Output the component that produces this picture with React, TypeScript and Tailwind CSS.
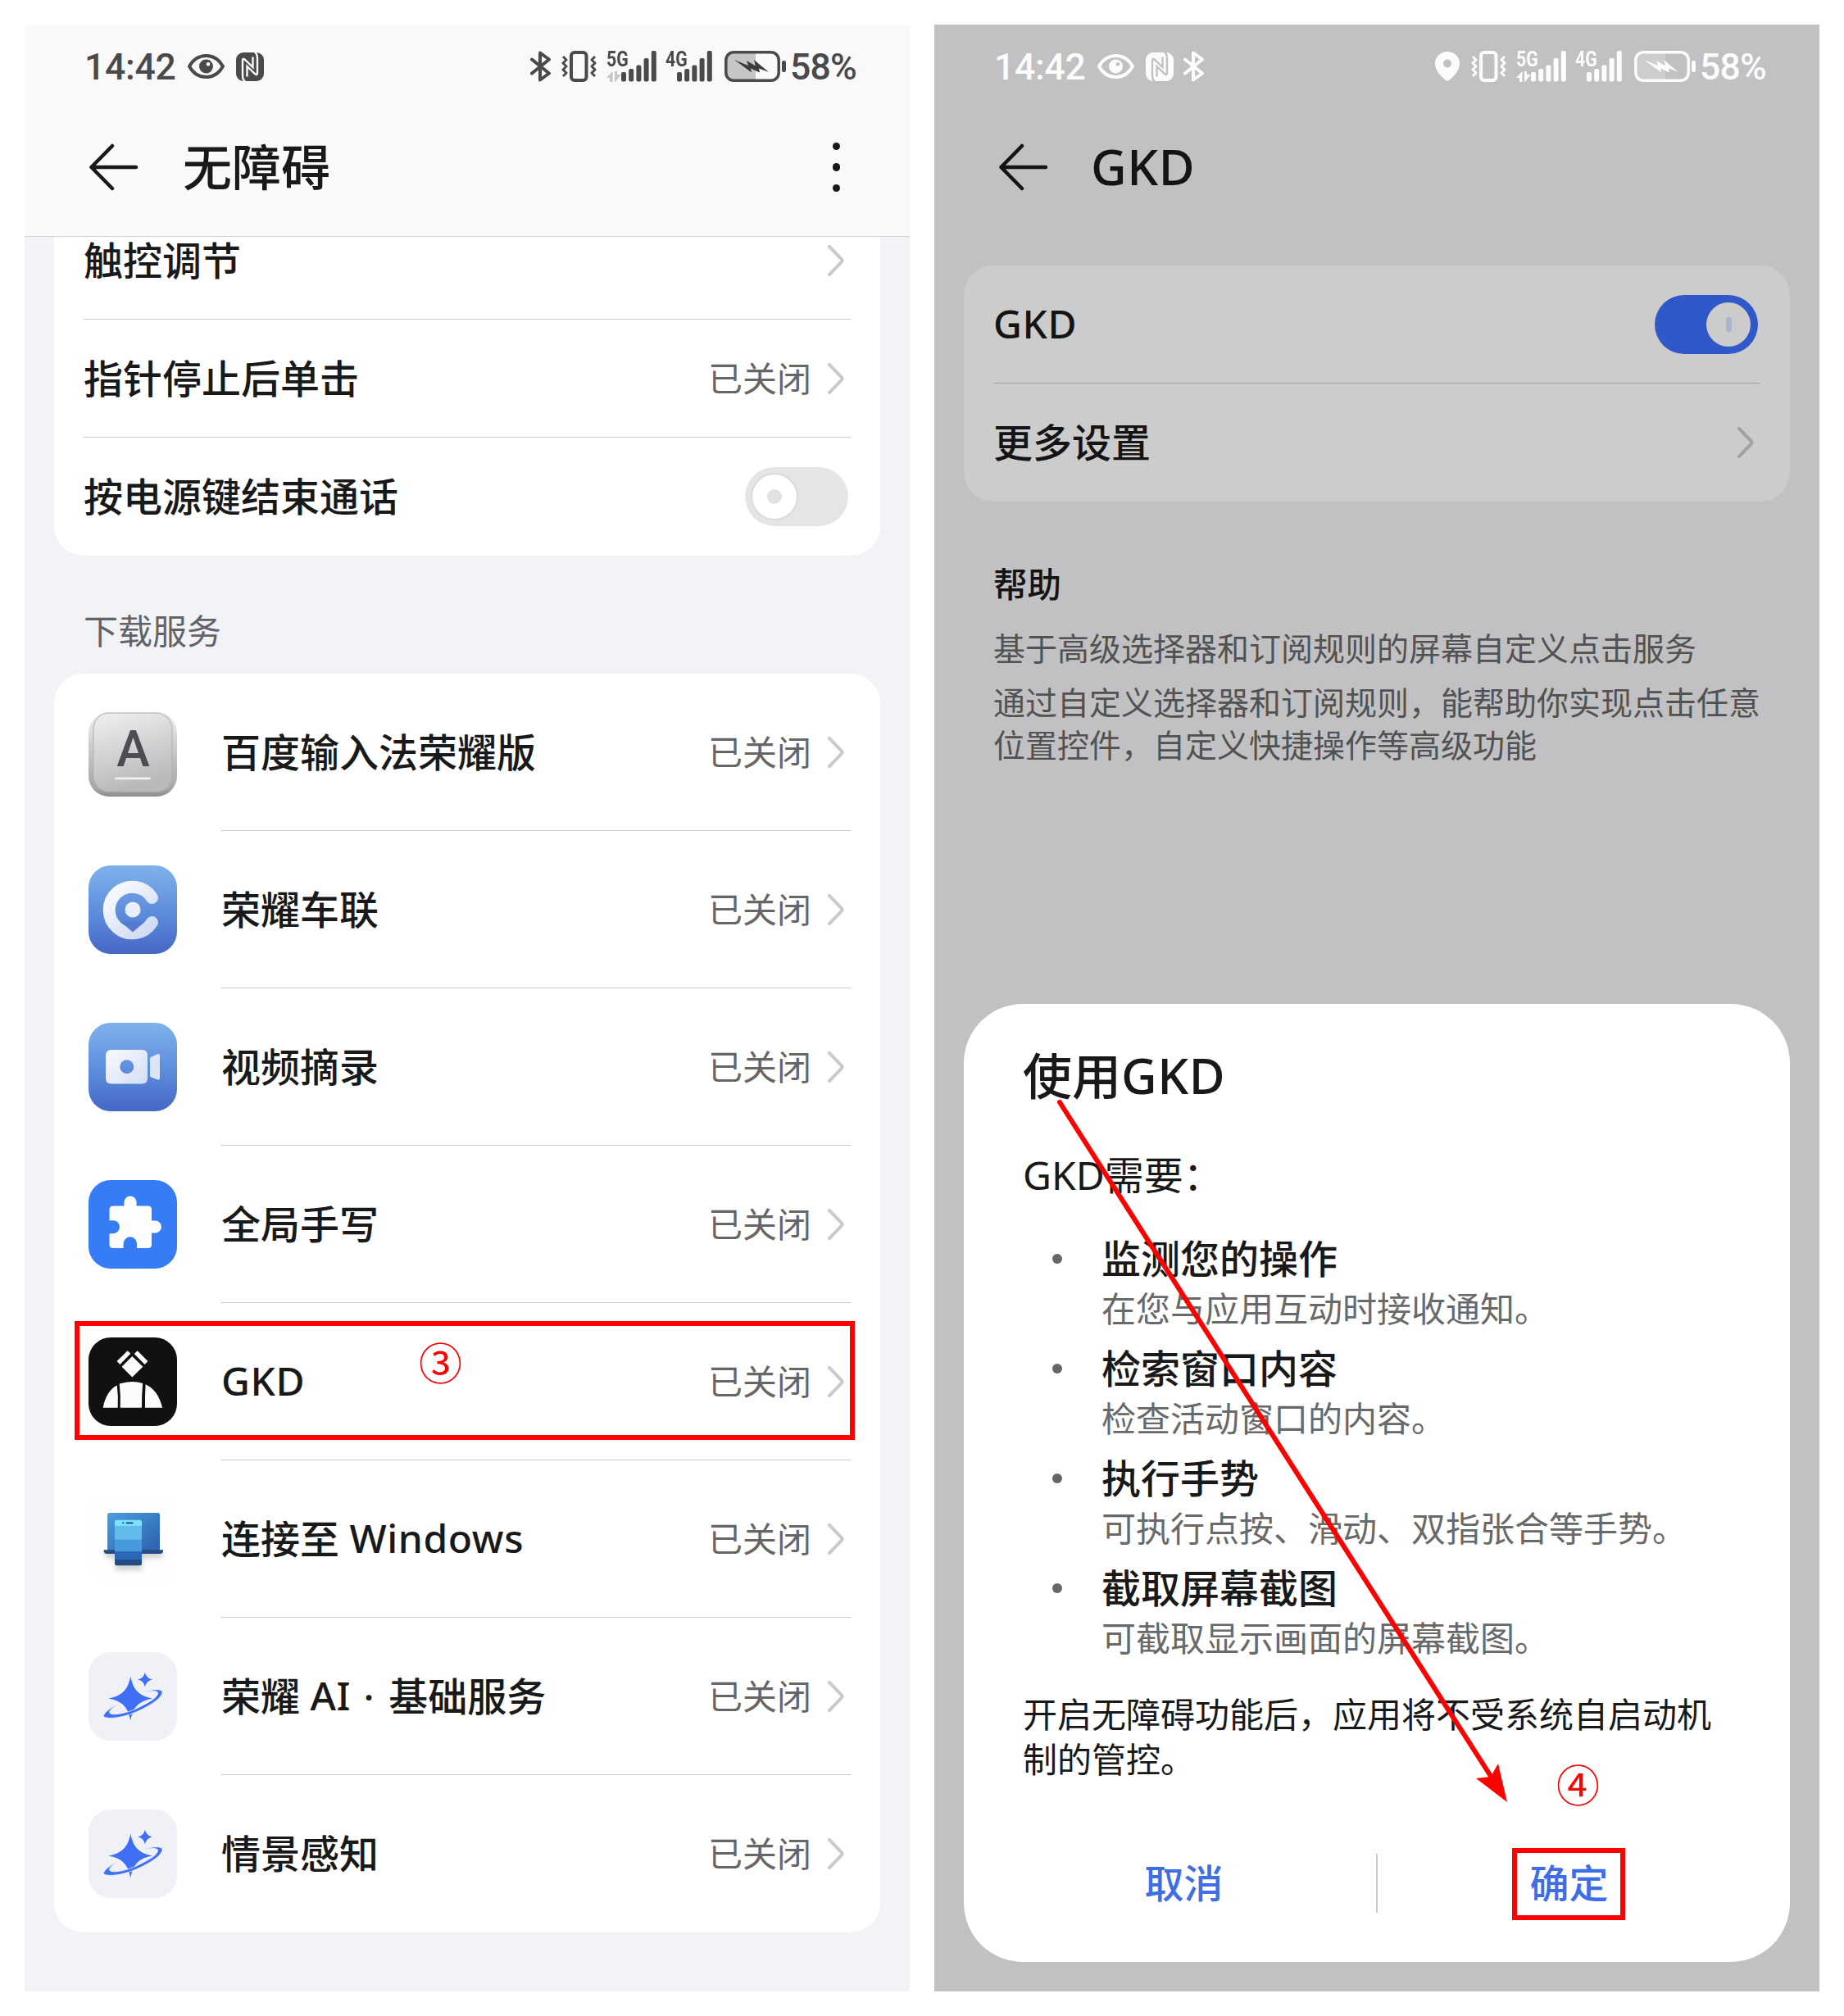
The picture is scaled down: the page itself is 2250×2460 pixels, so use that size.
import React from 'react';

/* ---------- status bar glyphs ---------- */

const EyeIcon = () => (
  <svg width="45" height="32" viewBox="0 0 45 32" fill="none" className="shrink-0">
    <path d="M2 16C7 7 14 3 22.500 3S38 7 43 16C38 25 31 29 22.500 29S7 25 2 16Z" stroke="currentColor" strokeWidth="4" strokeLinejoin="round" />
    <path fillRule="evenodd" clipRule="evenodd" d="M22.500 7.500a8.500 8.500 0 1 0 0 17a8.500 8.500 0 1 0 0-17ZM25 11a2.300 2.300 0 1 1 0 4.600a2.300 2.300 0 1 1 0-4.600Z" fill="currentColor" />
  </svg>
);

const NfcIcon = ({ gap }: { gap: string }) => (
  <svg width="34" height="35" viewBox="0 0 34 35" fill="none" className="shrink-0">
    <rect width="34" height="35" rx="9" fill="currentColor" />
    <path d="M11.500 36C8.500 34 8 31 8 28V10Q8 6.500 11 9L20.500 18V5.500" stroke={gap} strokeWidth="2.400" />
    <path d="M22.500 -1C25.500 1 26 4 26 7V25Q26 28.500 23 26L13.500 17V29.500" stroke={gap} strokeWidth="2.400" />
  </svg>
);

const BluetoothIcon = () => (
  <svg width="26" height="38" viewBox="0 0 26 38" fill="none" className="shrink-0">
    <path d="M2 10.500L23 27.500L12 35.500V2.500L23 10.500L2 27.500" stroke="currentColor" strokeWidth="4" strokeLinejoin="round" strokeLinecap="round" />
  </svg>
);

const PinIcon = () => (
  <svg width="30" height="36" viewBox="0 0 30 36" className="shrink-0">
    <path fill="currentColor" fillRule="evenodd" d="M15 0C23.500 0 30 6.500 30 14.500C30 23 22 31 17 35Q15 36.500 13 35C8 31 0 23 0 14.500C0 6.500 6.500 0 15 0ZM15 9.500a5 5 0 1 0 0 10a5 5 0 1 0 0-10Z" />
  </svg>
);

const VibrateIcon = () => (
  <svg width="43" height="38" viewBox="0 0 43 38" fill="none" stroke="currentColor" className="shrink-0">
    <rect x="12" y="2" width="18.500" height="34" rx="4" strokeWidth="4" />
    <path d="M2 7L6 11L2 15L6 19L2 23L6 27L2 31M41 7L37 11L41 15L37 19L41 23L37 27L41 31" strokeWidth="3" strokeLinejoin="round" />
  </svg>
);

const SignalBars = () => (
  <svg width="43" height="38" viewBox="0 0 43 38" fill="currentColor" className="shrink-0">
    <rect x="0" y="26" width="6" height="11.500" rx="2" />
    <rect x="9.200" y="22" width="6" height="15.500" rx="2" />
    <rect x="18.400" y="17.500" width="6" height="20" rx="2" />
    <rect x="27.600" y="9" width="6" height="28.500" rx="2" />
    <rect x="36.800" y="0" width="6" height="37.500" rx="2" />
  </svg>
);

const Signal = ({ label, arrows }: { label: string; arrows?: string }) => (
  <div className="flex h-[38px] items-start">
    <div className={`flex shrink-0 flex-col ${arrows ? 'w-[18.500px]' : 'w-[14px]'}`}>
      <span className="h-[22px] w-[26px] origin-left scale-x-[0.82] whitespace-nowrap font-['Roboto',sans-serif] text-[26px] font-bold leading-[20px]">{label}</span>
      {arrows && (
        <svg width="18" height="13" viewBox="0 0 18 13" fill={arrows} className="mt-[3px]">
          <path d="M0 8L7.500 0V13H4V8ZM10 0H13V4H18L10.500 13H10Z" />
        </svg>
      )}
    </div>
    <SignalBars />
  </div>
);

const Battery = ({ fill, bolt }: { fill: string; bolt: string }) => (
  <svg width="76" height="38" viewBox="0 0 76 38" fill="none" className="shrink-0">
    <path d="M10 3H38V35H10Q3 35 3 27V11Q3 3 10 3Z" fill={fill} />
    <rect x="1.800" y="1.800" width="64.400" height="34.400" rx="9.500" stroke="currentColor" strokeWidth="3.500" />
    <path d="M12 11L29 18L27 12L38 18.500L36 11L54 26L42 21.500L43 26.500L32 21.500L33 26.500Z" fill={bolt} />
    <rect x="70" y="12" width="5" height="14" rx="2" fill="currentColor" />
  </svg>
);

type StatusProps = { dark?: boolean };

const StatusBar = ({ dark }: StatusProps) => (
  <div className={`flex h-[102px] items-center pl-[73px] ${dark ? 'text-[#fcfcfc]' : 'text-[#4a4a4a]'}`}>
    <span className="w-[126px] whitespace-nowrap pt-[2px] font-['Roboto',sans-serif] text-[44.500px] font-medium leading-[60px] tracking-[-0.300px]">14:42</span>
    <EyeIcon />
    <div className="ml-[14px]"><NfcIcon gap={dark ? '#c1c1c3' : '#f9f9f9'} /></div>
    {dark && <div className="ml-[12px]"><BluetoothIcon /></div>}
    <div className="ml-auto mr-[64px] flex items-center">
      {dark ? <div className="mr-[14px]"><PinIcon /></div> : <div className="mr-[12px]"><BluetoothIcon /></div>}
      <VibrateIcon />
      <div className="ml-[12px]"><Signal label="5G" arrows={dark ? '#fcfcfc' : '#c6c6c6'} /></div>
      <div className="ml-[11px]"><Signal label="4G" /></div>
      <div className="ml-[15px]"><Battery fill={dark ? '#cdcdce' : '#c6c6c6'} bolt={dark ? '#fcfcfc' : '#3c3c3c'} /></div>
      <span className="ml-[4px] w-[82px] whitespace-nowrap pt-[2px] font-['Roboto',sans-serif] text-[44.500px] font-medium leading-[60px] tracking-[-0.800px]">58%</span>
    </div>
  </div>
);

const BackArrow = () => (
  <svg width="60" height="60" viewBox="0 0 60 60" fill="none" stroke="currentColor" strokeWidth="4.500" strokeLinejoin="round" strokeLinecap="round" className="shrink-0">
    <path d="M28 4L2.500 30L28 56M2.500 30H57" />
  </svg>
);

const Chevron = ({ className }: { className: string }) => (
  <svg width="20" height="38" viewBox="0 0 20 38" fill="none" stroke="currentColor" strokeWidth="4" strokeLinecap="round" strokeLinejoin="round" className={`shrink-0 ${className}`}>
    <path d="M2 2L16.500 17Q18.500 19 16.500 21L2 36" />
  </svg>
);

/* ---------- app icons ---------- */

const KeyboardIcon = () => (
  <svg width="108" height="108" viewBox="0 0 108 108">
    <defs>
      <linearGradient id="kbOuter" x1="0" y1="0" x2="0" y2="1">
        <stop offset="0" stopColor="#f2f2f2" /><stop offset="0.500" stopColor="#c4c4c4" /><stop offset="0.900" stopColor="#a6a6a6" /><stop offset="1" stopColor="#8e8e8e" />
      </linearGradient>
      <linearGradient id="kbInner" x1="0" y1="0" x2="0.300" y2="1">
        <stop offset="0" stopColor="#f0f1f1" /><stop offset="1" stopColor="#b9b9bb" />
      </linearGradient>
    </defs>
    <rect x="0" y="5" width="108" height="103" rx="25" fill="url(#kbOuter)" />
    <rect x="6" y="6" width="96" height="96" rx="19" fill="url(#kbInner)" stroke="#b0b0b0" strokeOpacity="0.700" strokeWidth="1.500" />
    <text x="54.500" y="71" textAnchor="middle" fontFamily="Roboto" fontSize="61" fontWeight="500" fill="#4b4d52">A</text>
    <rect x="32" y="84.500" width="44" height="2.800" rx="1.400" fill="#f1f1f1" />
  </svg>
);

const CarLinkIcon = () => (
  <svg width="108" height="108" viewBox="0 0 108 108">
    <defs>
      <linearGradient id="blueBg" x1="0" y1="0" x2="0" y2="1">
        <stop offset="0" stopColor="#7fb2ec" /><stop offset="0.500" stopColor="#608fdc" /><stop offset="1" stopColor="#4567c6" />
      </linearGradient>
      <linearGradient id="whiteFade" gradientUnits="userSpaceOnUse" x1="25" y1="25" x2="80" y2="85">
        <stop offset="0" stopColor="#fbfcff" /><stop offset="1" stopColor="#ccd8f0" />
      </linearGradient>
    </defs>
    <rect width="108" height="108" rx="27" fill="url(#blueBg)" />
    <path d="M77.500 39.500A28.300 28.300 0 1 0 77.500 69.500" fill="none" stroke="url(#whiteFade)" strokeWidth="15" strokeLinecap="round" />
    <path d="M39.500 69L54 81.500L68.500 69Z" fill="#557bd1" />
    <circle cx="54" cy="54" r="9.500" fill="#eaf0fb" />
  </svg>
);

const VideoIcon = () => (
  <svg width="108" height="108" viewBox="0 0 108 108">
    <rect width="108" height="108" rx="27" fill="url(#blueBg)" />
    <path fillRule="evenodd" d="M28 33H65Q72 33 72 40V67.500Q72 74.500 65 74.500H28Q21 74.500 21 67.500V40Q21 33 28 33ZM46.800 45.200a8.500 8.500 0 1 0 0 17a8.500 8.500 0 1 0 0-17Z" fill="url(#whiteFade)" />
    <path d="M75 43.500Q75 42.300 76 41.900L84 38.200Q87 37.200 87 40V67.500Q87 70.300 84 69.300L76 66.200Q75 65.800 75 64.500Z" fill="#dce6f7" />
  </svg>
);

const PuzzleIcon = () => (
  <svg width="108" height="108" viewBox="0 0 108 108">
    <rect width="108" height="108" rx="27" fill="#367cf6" />
    <path
      fill="#fcfdff"
      d="M30 31.500H43.400V27A7.600 7.600 0 0 1 58.600 27V31.500H72.500Q77 31.500 77 36V49.500H81.500A7.500 7.500 0 0 1 81.500 64.500H77V78.500Q77 83 72.500 83H59V77.500A8.200 8.200 0 0 0 42.600 77.500V83H30Q25.500 83 25.500 78.500V65.200H30A7.800 7.800 0 0 0 30 49.200H25.500V36Q25.500 31.500 30 31.500Z"
    />
  </svg>
);

const GkdIcon = () => (
  <svg width="108" height="108" viewBox="0 0 108 108">
    <rect width="108" height="108" rx="27" fill="#111111" />
    <g fill="#fcfcfc">
      <path d="M53.300 23L66.300 35.700L53.300 48.500L40.600 35.700Z" />
      <path d="M47.700 16.200L51.300 19.700L38.500 33L34.600 29Z" />
      <path d="M59.700 16.200L72.400 29L68.700 33L55.700 20Z" />
      <path d="M17.700 85.800C20 72 27 62 34.800 58.500Q36.500 72 35.700 85.800Z" />
      <path d="M37.700 56.600Q53 51.500 66.200 56Q64.700 72 65 85.800H38.700Q39.500 71 37.700 56.600Z" />
      <path d="M69.600 57.300C80 62 87 72 90 85.800H69Q68.800 70 69.600 57.300Z" />
    </g>
  </svg>
);

const WindowsLinkIcon = () => (
  <svg width="108" height="108" viewBox="0 0 108 108">
    <defs>
      <linearGradient id="laptop" x1="0" y1="0" x2="1" y2="1">
        <stop offset="0" stopColor="#4b9edf" /><stop offset="1" stopColor="#2b5fa8" />
      </linearGradient>
      <clipPath id="phoneClip"><rect x="32" y="30.700" width="33" height="55.600" rx="2.500" /></clipPath>
      <filter id="soft" x="-30%" y="-30%" width="160%" height="180%"><feGaussianBlur stdDeviation="3" /></filter>
    </defs>
    <rect width="108" height="108" rx="27" fill="#fefefe" />
    <g filter="url(#soft)" fill="#000000" fillOpacity="0.180">
      <rect x="20" y="68" width="70" height="9" />
      <rect x="33" y="75" width="32" height="17" />
    </g>
    <rect x="23" y="22" width="64" height="48" rx="2.500" fill="url(#laptop)" />
    <path d="M18.700 67.300H91V68.500Q91 72 87 72H22.700Q18.700 72 18.700 68.500Z" fill="#264b80" />
    <g clipPath="url(#phoneClip)">
      <rect x="32" y="30" width="33" height="8" fill="#7ce2fe" />
      <rect x="32" y="38" width="33" height="17" fill="#62bbea" />
      <rect x="32" y="54.700" width="33" height="15" fill="#4898dc" />
      <rect x="32" y="69" width="33" height="10" fill="#2b67b9" />
      <rect x="32" y="79" width="33" height="8" fill="#264b80" />
    </g>
    <circle cx="42.300" cy="34.300" r="1.100" fill="#23639f" />
    <rect x="45.500" y="33.300" width="9.200" height="2.200" rx="1.100" fill="#23639f" />
  </svg>
);

const SparkleIcon = () => (
  <svg width="108" height="108" viewBox="0 0 108 108">
    <rect width="108" height="108" rx="27" fill="#eff1f7" />
    <g fill="#3e6ff5">
      <path d="M51.300 29.500C54.500 45 60 53 78 56.600C60 60 54.500 68 51.300 83.500C48 68 42.500 60 24.500 56.600C42.500 53 48 45 51.300 29.500Z" />
      <path d="M69 24.500C70.500 30 72.500 32 78 33.500C72.500 35 70.500 37 69 42.500C67.500 37 65.500 35 60 33.500C65.500 32 67.500 30 69 24.500Z" />
      <path stroke="#eff1f7" strokeWidth="0.800" d="M35.300 63.500C22 70.500 17 77 18.700 78.700C24 82.500 42 79.500 55 74.300C75 66 90 56 90 48.500C89 44.300 78 45 65 49.300C76 46.800 84.500 46.500 84.700 50C84 56 72 62.500 57 69.500C42 76 27 77.500 25.700 74C25 71.500 29 68 35.300 63.500Z" />
    </g>
  </svg>
);

/* ---------- rows ---------- */

const Label = ({ children }: { children: React.ReactNode }) => (
  <span className="whitespace-nowrap text-[48px] font-medium leading-[72px]">{children}</span>
);

const Latin = ({ children }: { children: React.ReactNode }) => (
  <span className="relative -top-px tracking-[0.600px]">{children}</span>
);

const Closed = () => (
  <div className="ml-auto flex items-center gap-[20px] pr-[8px]">
    <span className="whitespace-nowrap text-[42px] leading-[60px] text-[#666666]">已关闭</span>
    <Chevron className="text-[#cacaca]" />
  </div>
);

const apps: { name: React.ReactNode; Icon: () => React.ReactElement; marked?: boolean }[] = [
  { name: '百度输入法荣耀版', Icon: KeyboardIcon },
  { name: '荣耀车联', Icon: CarLinkIcon },
  { name: '视频摘录', Icon: VideoIcon },
  { name: '全局手写', Icon: PuzzleIcon },
  { name: <Latin>GKD</Latin>, Icon: GkdIcon, marked: true },
  { name: <>连接至 <Latin>Windows</Latin></>, Icon: WindowsLinkIcon },
  { name: <>荣耀 <Latin>AI</Latin> <span className="ml-[3px] mr-[5px]">·</span> 基础服务</>, Icon: SparkleIcon },
  { name: '情景感知', Icon: SparkleIcon },
];

const AccessibilityScreen = () => (
  <section className="flex h-[2400px] w-[1080px] flex-col bg-[#f1f3f7] text-[#191919]">
    <header className="h-[259px] shrink-0 border-b border-[#d3d4d7] bg-[#f9f9f9]">
      <StatusBar />
      <div className="flex h-[144px] items-center pl-[79px] pr-[85px]">
        <BackArrow />
        <h1 className="ml-[54px] text-[60px] font-medium leading-[80px]">无障碍</h1>
        <div className="ml-auto flex flex-col gap-[16px]">
          <i className="size-[9.500px] rounded-full bg-[#191919]" />
          <i className="size-[9.500px] rounded-full bg-[#191919]" />
          <i className="size-[9.500px] rounded-full bg-[#191919]" />
        </div>
      </div>
    </header>

    <div className="mx-[36px] h-[389px] shrink-0 overflow-hidden rounded-b-[36px] bg-white px-[36px]">
      <div className="-mt-[43px] flex h-[144px] items-center border-b border-[#cccccc]">
        <Label>触控调节</Label>
        <div className="ml-auto pr-[8px]"><Chevron className="text-[#cacaca]" /></div>
      </div>
      <div className="flex h-[144px] items-center border-b border-[#cccccc]">
        <Label>指针停止后单击</Label>
        <Closed />
      </div>
      <div className="flex h-[144px] items-center">
        <Label>按电源键结束通话</Label>
        <div className="ml-auto mr-[3px] flex h-[72px] w-[126px] items-center rounded-full bg-[#e5e5e5] pl-[7px]">
          <div className="flex size-[58px] items-center justify-center rounded-full border-2 border-[#dbdbdb] bg-white">
            <i className="size-[18px] rounded-full bg-[#e2e2e2]" />
          </div>
        </div>
      </div>
    </div>

    <h2 className="ml-[72px] mt-[62px] h-[82px] shrink-0 text-[42px] leading-[60px] text-[#626366]">下载服务</h2>

    <div className="mx-[36px] flex shrink-0 flex-col rounded-[36px] bg-white pl-[42px] pr-[36px]">
      {apps.map(({ name, Icon, marked }, i) => (
        <div key={i} className="relative flex h-[192px] items-center">
          <Icon />
          <div className={`ml-[54px] flex h-full flex-1 items-center ${i < apps.length - 1 ? 'border-b border-[#cccccc]' : 'pb-px'}`}>
            <Label>{name}</Label>
            <Closed />
          </div>
          {marked && (
            <div className="absolute -left-[17px] -right-[5px] top-[22px] h-[145px] border-[6px] border-[#ff0000]">
              <span className="absolute left-[414px] top-[6px] text-[53px] leading-[80px] text-[#ff0000]">③</span>
            </div>
          )}
        </div>
      ))}
    </div>
  </section>
);

/* ---------- confirmation dialog ---------- */

const permissions = [
  ['监测您的操作', '在您与应用互动时接收通知。'],
  ['检索窗口内容', '检查活动窗口的内容。'],
  ['执行手势', '可执行点按、滑动、双指张合等手势。'],
  ['截取屏幕截图', '可截取显示画面的屏幕截图。'],
];

const Dialog = () => (
  <div className="relative mx-[36px] mb-[36px] mt-auto flex h-[1169px] flex-col rounded-[72px] bg-white text-[#191919]">
    <h2 className="ml-[72px] mt-[48px] text-[60px] font-medium leading-[80px]">使用<Latin>GKD</Latin></h2>
    <p className="ml-[72px] mt-[45px] text-[48px] leading-[72px]">GKD需要：</p>
    <ul className="mt-[34px] flex flex-col">
      {permissions.map(([title, text]) => (
        <li key={title} className="flex h-[134px] pl-[108px]">
          <i className="mt-[26px] size-[12px] rounded-full bg-[#666666]" />
          <div className="ml-[48px] flex flex-col">
            <b className="text-[48px] font-medium leading-[64px]">{title}</b>
            <span className="whitespace-nowrap text-[42px] leading-[58px] text-[#696969]">{text}</span>
          </div>
        </li>
      ))}
    </ul>
    <p className="mx-[72px] mt-[24px] text-[42px] leading-[55px]">开启无障碍功能后，应用将不受系统自启动机制的管控。</p>
    <div className="absolute bottom-[60px] left-[72px] flex h-[72px] items-center text-[48px] font-medium text-[#3f6de6]">
      <span className="w-[431px] pr-[38px] text-center leading-[72px]">取消</span>
      <i className="h-[72px] w-[2px] bg-[#cccccc]" />
      <span className="w-[431px] pl-[36px] text-center leading-[72px]">确定</span>
    </div>
    <div className="absolute left-[669px] top-[1030px] h-[88px] w-[138px] border-[6px] border-[#ff0000]" />
    <span className="absolute left-[723px] top-[914px] text-[53px] leading-[80px] text-[#ff0000]">④</span>
    <svg width="600" height="900" viewBox="0 0 600 900" className="absolute left-[76px] top-[75px]">
      <path d="M41 45L570 872" stroke="#ff0000" strokeWidth="6" strokeLinecap="round" />
      <path d="M587 899L549 870L567 868L576 852Z" fill="#ff0000" />
    </svg>
  </div>
);

const ServiceScreen = () => (
  <section className="flex h-[2400px] w-[1080px] flex-col bg-[#c1c1c3] text-[#141414]">
    <StatusBar dark />
    <div className="flex h-[144px] shrink-0 items-center pl-[79px]">
      <BackArrow />
      <h1 className="ml-[52px] text-[60px] font-medium leading-[80px]"><Latin>GKD</Latin></h1>
    </div>
    <div className="mx-[36px] mt-[48px] h-[288px] shrink-0 rounded-[36px] bg-[#cccccc] px-[36px]">
      <div className="flex h-[144px] items-center border-b border-[#a3a3a3]">
        <Label><Latin>GKD</Latin></Label>
        <div className="ml-auto mr-[3px] flex h-[72px] w-[126px] items-center justify-end rounded-full bg-[#3058c8] pr-[9px]">
          <div className="flex size-[54px] items-center justify-center rounded-full bg-[#cccccc]">
            <i className="h-[18px] w-[7px] rounded-full bg-[#a9b3cb]" />
          </div>
        </div>
      </div>
      <div className="flex h-[144px] items-center">
        <Label>更多设置</Label>
        <div className="ml-auto pr-[8px]"><Chevron className="text-[#a2a2a2]" /></div>
      </div>
    </div>
    <div className="ml-[72px] mt-[71px] w-[940px] shrink-0">
      <h3 className="text-[41.500px] font-medium leading-[60px]">帮助</h3>
      <p className="mt-[22px] text-[39px] leading-[52px] text-[#525252]">基于高级选择器和订阅规则的屏幕自定义点击服务</p>
      <p className="mt-[14px] text-[39px] leading-[52px] text-[#525252]">通过自定义选择器和订阅规则，能帮助你实现点击任意位置控件，自定义快捷操作等高级功能</p>
    </div>
    <Dialog />
  </section>
);

export default function App() {
  return (
    <main lang="zh-CN" className="flex h-[2460px] w-[2250px] gap-[30px] overflow-hidden bg-white p-[30px] font-['Noto_Sans','Noto_Sans_CJK_SC',sans-serif]">
      <AccessibilityScreen />
      <ServiceScreen />
    </main>
  );
}
